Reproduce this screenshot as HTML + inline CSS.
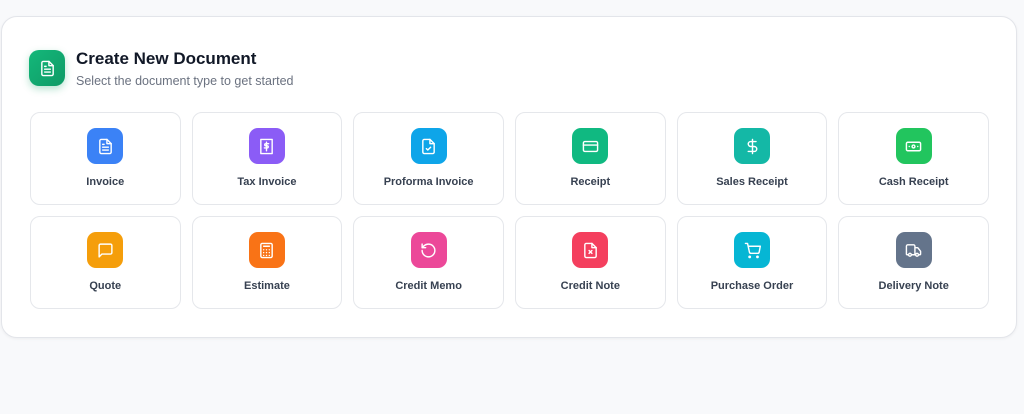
<!DOCTYPE html>
<html><head><meta charset="utf-8"><style>
*{box-sizing:border-box;margin:0;padding:0}
body{width:1024px;height:414px;background:#f8f9fb;font-family:"Liberation Sans",sans-serif;position:relative;overflow:hidden}
.card{position:absolute;left:1px;top:16px;width:1016px;height:322px;background:#fff;border:1px solid #e3e5ea;border-radius:16px;box-shadow:0 1px 3px rgba(0,0,0,.05)}
.hicon{position:absolute;left:29px;top:50px;width:36px;height:36px;border-radius:10px;background:linear-gradient(135deg,#14b87a,#0f9a66);box-shadow:0 3px 8px rgba(16,160,100,.3);display:flex;align-items:center;justify-content:center}
h1{position:absolute;left:76px;top:49px;font-size:17px;font-weight:bold;color:#111827}
.sub{position:absolute;left:76px;top:74px;font-size:12.5px;color:#6b7280}
.grid{position:absolute;left:30px;top:112px;display:grid;grid-template-columns:repeat(6,150.5px);grid-template-rows:93px 93px;column-gap:11.2px;row-gap:11px}
.it{border:1px solid #e5e7eb;border-radius:10px;background:#fff;position:relative}
.ic{position:absolute;left:50%;top:15px;margin-left:-18px;width:36px;height:36px;border-radius:9px;display:flex;align-items:center;justify-content:center}
.lb{position:absolute;left:0;right:0;top:63px;text-align:center;font-size:11px;font-weight:bold;color:#374151}
svg{width:17px;height:17px;fill:none;stroke:#fff;stroke-width:2;stroke-linecap:round;stroke-linejoin:round}
</style></head><body>
<div class="card"></div>
<div class="hicon"><svg viewBox="0 0 24 24"><path d="M14 2H6a2 2 0 0 0-2 2v16a2 2 0 0 0 2 2h12a2 2 0 0 0 2-2V8z"/><path d="M14 2v6h6M8 13h8M8 17h8M8 9h2"/></svg></div>
<h1>Create New Document</h1>
<div class="sub">Select the document type to get started</div>
<div class="grid">
<div class="it"><div class="ic" style="background:#3b82f6"><svg viewBox="0 0 24 24"><path d="M14 2H6a2 2 0 0 0-2 2v16a2 2 0 0 0 2 2h12a2 2 0 0 0 2-2V8z"/><path d="M14 2v6h6M8 13h8M8 17h8M8 9h2"/></svg></div><div class="lb">Invoice</div></div>
<div class="it"><div class="ic" style="background:#8b5cf6"><svg viewBox="0 0 24 24"><path d="M4 2h16v20H4z"/><path d="M15 8h-4a1.5 1.5 0 0 0 0 3h2a1.5 1.5 0 0 1 0 3H9M12 6v12"/></svg></div><div class="lb">Tax Invoice</div></div>
<div class="it"><div class="ic" style="background:#0ea5e9"><svg viewBox="0 0 24 24"><path d="M14 2H6a2 2 0 0 0-2 2v16a2 2 0 0 0 2 2h12a2 2 0 0 0 2-2V8z"/><path d="M14 2v6h6M9 15l2 2 4-4"/></svg></div><div class="lb">Proforma Invoice</div></div>
<div class="it"><div class="ic" style="background:#10b981"><svg viewBox="0 0 24 24"><rect x="2" y="5" width="20" height="14" rx="2"/><path d="M2 10h20"/></svg></div><div class="lb">Receipt</div></div>
<div class="it"><div class="ic" style="background:#14b8a6"><svg viewBox="0 0 24 24"><path d="M12 2v20M17 5H9.5a3.5 3.5 0 0 0 0 7h5a3.5 3.5 0 0 1 0 7H6"/></svg></div><div class="lb">Sales Receipt</div></div>
<div class="it"><div class="ic" style="background:#22c55e"><svg viewBox="0 0 24 24"><rect x="2" y="6" width="20" height="12" rx="2"/><circle cx="12" cy="12" r="2"/><path d="M6 12h.01M18 12h.01"/></svg></div><div class="lb">Cash Receipt</div></div>
<div class="it"><div class="ic" style="background:#f59e0b"><svg viewBox="0 0 24 24"><path d="M21 15a2 2 0 0 1-2 2H7l-4 4V5a2 2 0 0 1 2-2h14a2 2 0 0 1 2 2z"/></svg></div><div class="lb">Quote</div></div>
<div class="it"><div class="ic" style="background:#f97316"><svg viewBox="0 0 24 24"><rect x="4" y="2" width="16" height="20" rx="2"/><path d="M8 6h8M8 11h.01M12 11h.01M16 11h.01M8 15h.01M12 15h.01M16 15h.01M8 19h.01M12 19h.01M16 19h.01"/></svg></div><div class="lb">Estimate</div></div>
<div class="it"><div class="ic" style="background:#ec4899"><svg viewBox="0 0 24 24"><path d="M3 12a9 9 0 1 0 9-9 9.75 9.75 0 0 0-6.74 2.74L3 8"/><path d="M3 3v5h5"/></svg></div><div class="lb">Credit Memo</div></div>
<div class="it"><div class="ic" style="background:#f43f5e"><svg viewBox="0 0 24 24"><path d="M14 2H6a2 2 0 0 0-2 2v16a2 2 0 0 0 2 2h12a2 2 0 0 0 2-2V8z"/><path d="M14 2v6h6M10 12l4 4M14 12l-4 4"/></svg></div><div class="lb">Credit Note</div></div>
<div class="it"><div class="ic" style="background:#06b6d4"><svg viewBox="0 0 24 24"><circle cx="8" cy="21" r="1"/><circle cx="19" cy="21" r="1"/><path d="M2 2h3l2.7 12.4a2 2 0 0 0 2 1.6h9.7a2 2 0 0 0 2-1.6L23 6H6"/></svg></div><div class="lb">Purchase Order</div></div>
<div class="it"><div class="ic" style="background:#64748b"><svg viewBox="0 0 24 24"><path d="M14 18V6a2 2 0 0 0-2-2H4a2 2 0 0 0-2 2v11a1 1 0 0 0 1 1h2M15 18H9M19 18h2a1 1 0 0 0 1-1v-3.65a1 1 0 0 0-.22-.62l-3.48-4.35A1 1 0 0 0 17.52 8H14"/><circle cx="17" cy="18" r="2"/><circle cx="7" cy="18" r="2"/></svg></div><div class="lb">Delivery Note</div></div>
</div>
</body></html>
